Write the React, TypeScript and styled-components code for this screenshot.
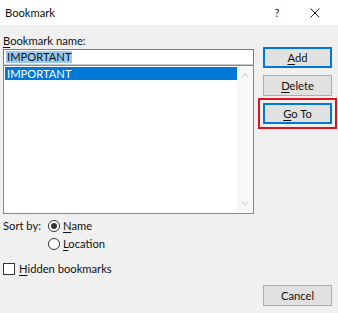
import styled, { createGlobalStyle } from 'styled-components';

const GlobalStyle = createGlobalStyle`
  html, body {
    margin: 0;
    padding: 0;
    background: #f0f0f0;
  }
  * {
    box-sizing: border-box;
  }
`;

const Window = styled.div`
  width: 338px;
  height: 313px;
  background: #f0f0f0;
  font-family: 'Segoe UI', Lato, 'Noto Sans', sans-serif;
  font-size: 11.2px;
  color: #111;
  display: flex;
  flex-direction: column;
  overflow: hidden;
  white-space: nowrap;
`;

const TitleBar = styled.div`
  height: 25px;
  background: #fff;
  display: flex;
  align-items: center;
  padding-left: 5px;
  flex-shrink: 0;
`;

const Title = styled.span`
  flex: 1;
`;

const TitleButton = styled.span<{ $w: number }>`
  width: ${({ $w }) => $w}px;
  height: 25px;
  display: flex;
  align-items: center;
  justify-content: center;
  color: #222;
`;

const Body = styled.div`
  flex: 1;
  display: flex;
  padding: 10px 6px 7px 3px;
  gap: 9px;
`;

const LeftColumn = styled.div`
  width: 251px;
  display: flex;
  flex-direction: column;
`;

const RightColumn = styled.div`
  width: 69px;
  display: flex;
  flex-direction: column;
  padding-top: 12px;
  gap: 7px;
`;

const Label = styled.div`
  height: 14px;
  line-height: 12px;
`;

const Mnemonic = styled.span`
  text-decoration: underline;
  text-underline-offset: 2px;
`;

const NameInput = styled.div`
  height: 16px;
  border: 1px solid #7a7a7a;
  border-bottom-color: #c8c8c8;
  background: #fff;
  padding: 0 2px;
  display: flex;
  align-items: center;
`;

const Highlight = styled.span`
  background: #99c9ef;
  line-height: 12px;
  padding: 0 1px;
`;

const List = styled.div`
  height: 149px;
  border: 1px solid #828790;
  background: #fff;
  display: flex;
  padding: 1px 0 1px 1px;
`;

const ListItems = styled.div`
  flex: 1;
`;

const ListItem = styled.div<{ $selected?: boolean }>`
  height: 13px;
  line-height: 13px;
  padding-left: 2px;
  background: ${({ $selected }) => ($selected ? '#0078d7' : 'transparent')};
  color: ${({ $selected }) => ($selected ? '#fff' : '#000')};
`;

const ScrollBar = styled.div`
  width: 16px;
  background: #f8f8f8;
  display: flex;
  flex-direction: column;
  justify-content: space-between;
  align-items: center;
  padding: 6px 0;
  color: #c4c4c4;
`;

const SortRow = styled.div`
  display: flex;
  margin-top: 6px;
  gap: 8px;
`;

const SortLabel = styled.div`
  width: 37px;
  height: 12px;
  line-height: 12px;
`;

const RadioGroup = styled.div`
  display: flex;
  flex-direction: column;
  gap: 6px;
`;

const Option = styled.label`
  display: flex;
  align-items: center;
  gap: 3px;
  height: 12px;
  line-height: 12px;
`;

const Radio = styled.span<{ $checked?: boolean }>`
  width: 12px;
  height: 12px;
  border-radius: 50%;
  border: 1px solid #333;
  background: #fff;
  display: flex;
  align-items: center;
  justify-content: center;

  &::after {
    content: '';
    width: 6px;
    height: 6px;
    border-radius: 50%;
    background: ${({ $checked }) => ($checked ? '#333' : 'transparent')};
  }
`;

const CheckRow = styled(Option)`
  margin-top: 13px;
  gap: 4px;
`;

const CheckBox = styled.span`
  width: 12px;
  height: 12px;
  border: 1px solid #333;
  background: #fff;
`;

const Button = styled.div<{ $focused?: boolean }>`
  height: 21px;
  display: flex;
  align-items: center;
  justify-content: center;
  background: #e1e1e1;
  border: ${({ $focused }) => ($focused ? '2px solid #0078d7' : '1px solid #adadad')};
`;

const HighlightFrame = styled.div`
  position: relative;

  &::before {
    content: '';
    position: absolute;
    inset: -5px;
    border: 2px solid #e0121e;
    pointer-events: none;
  }
`;

const Spacer = styled.div`
  flex: 1;
`;

const Chevron = ({ up }: { up?: boolean }) => (
  <svg width="8" height="5" viewBox="0 0 8 5">
    <path
      d={up ? 'M0.5 4.5 L4 1 L7.5 4.5' : 'M0.5 0.5 L4 4 L7.5 0.5'}
      fill="none"
      stroke="currentColor"
      strokeWidth="1"
    />
  </svg>
);

export default function App() {
  return (
    <>
      <GlobalStyle />
      <Window>
        <TitleBar>
          <Title>Bookmark</Title>
          <TitleButton $w={30}>?</TitleButton>
          <TitleButton $w={46}>
            <svg width="10" height="10" viewBox="0 0 10 10">
              <path d="M0.5 0.5 L9.5 9.5 M9.5 0.5 L0.5 9.5" stroke="#222" strokeWidth="1" />
            </svg>
          </TitleButton>
        </TitleBar>
        <Body>
          <LeftColumn>
            <Label>
              <Mnemonic>B</Mnemonic>ookmark name:
            </Label>
            <NameInput>
              <Highlight>IMPORTANT</Highlight>
            </NameInput>
            <List>
              <ListItems>
                <ListItem $selected>IMPORTANT</ListItem>
              </ListItems>
              <ScrollBar>
                <Chevron up />
                <Chevron />
              </ScrollBar>
            </List>
            <SortRow>
              <SortLabel>Sort by:</SortLabel>
              <RadioGroup>
                <Option>
                  <Radio $checked />
                  <span>
                    <Mnemonic>N</Mnemonic>ame
                  </span>
                </Option>
                <Option>
                  <Radio />
                  <span>
                    <Mnemonic>L</Mnemonic>ocation
                  </span>
                </Option>
              </RadioGroup>
            </SortRow>
            <CheckRow>
              <CheckBox />
              <span>
                <Mnemonic>H</Mnemonic>idden bookmarks
              </span>
            </CheckRow>
          </LeftColumn>
          <RightColumn>
            <Button $focused>
              <span>
                <Mnemonic>A</Mnemonic>dd
              </span>
            </Button>
            <Button>
              <span>
                <Mnemonic>D</Mnemonic>elete
              </span>
            </Button>
            <HighlightFrame>
              <Button $focused>
                <span>
                  <Mnemonic>G</Mnemonic>o To
                </span>
              </Button>
            </HighlightFrame>
            <Spacer />
            <Button>Cancel</Button>
          </RightColumn>
        </Body>
      </Window>
    </>
  );
}
